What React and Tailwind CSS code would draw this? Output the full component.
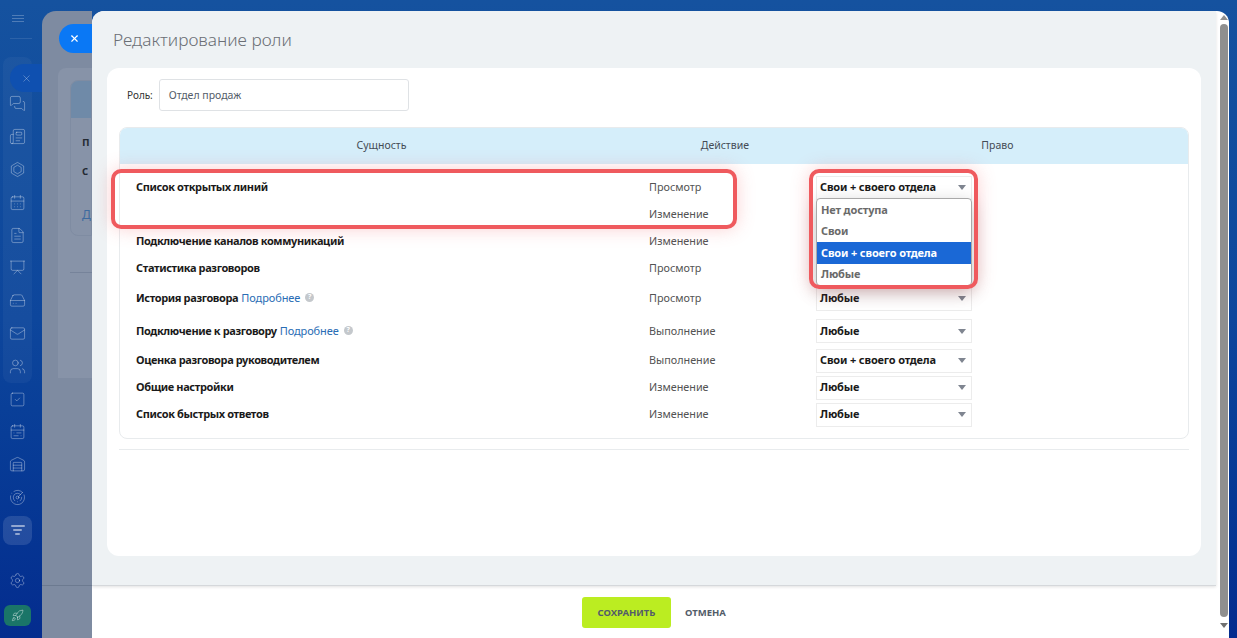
import React from "react";
import {
  MessagesSquare, Newspaper, CalendarDays, FileText, Presentation, HardDrive,
  Mail, Users, SquareCheck, CalendarRange, Warehouse, Radar, Settings, Rocket, X,
} from "lucide-react";

// шестиугольник с кольцом внутри, в lucide такого нет
function HexRing({ className, strokeWidth }) {
  return (
    <svg viewBox="0 0 24 24" fill="none" stroke="currentColor" strokeWidth={strokeWidth} strokeLinejoin="round" className={className}>
      <path d="M12 2l8.7 5v10L12 22l-8.7-5V7z" />
      <path d="M12 6l5.2 3v6L12 18l-5.2-3V9z" />
    </svg>
  );
}

const topIcons = [MessagesSquare, Newspaper, HexRing, CalendarDays, FileText, Presentation, HardDrive, Mail, Users];
const bottomIcons = [SquareCheck, CalendarRange, Warehouse, Radar];

const rows = [
  { name: "Список открытых линий", action: "Просмотр", right: "Свои + своего отдела", h: "h-[27px]" },
  { name: "", action: "Изменение", right: "Любые", h: "h-[27px]" },
  { name: "Подключение каналов коммуникаций", action: "Изменение", right: "Любые", h: "h-[27px]" },
  { name: "Статистика разговоров", action: "Просмотр", right: "Любые", h: "h-[27px]" },
  { name: "История разговора", more: true, action: "Просмотр", right: "Любые", h: "h-[33px]" },
  { name: "Подключение к разговору", more: true, action: "Выполнение", right: "Любые", h: "h-[32px]" },
  { name: "Оценка разговора руководителем", action: "Выполнение", right: "Свои + своего отдела", h: "h-[27px]" },
  { name: "Общие настройки", action: "Изменение", right: "Любые", h: "h-[27px]" },
  { name: "Список быстрых ответов", action: "Изменение", right: "Любые", h: "h-[27px]" },
];

const options = ["Нет доступа", "Свои", "Свои + своего отдела", "Любые"];

function Sidebar() {
  return (
    <aside className="relative w-[42px] shrink-0 flex flex-col">
      <div className="mt-[15px] ml-[12px] w-[12px] flex flex-col gap-[2px]">
        <div className="h-px bg-white/25" />
        <div className="h-px bg-white/25" />
        <div className="h-px bg-white/25" />
      </div>
      <div className="mt-[16px] mx-[10px] h-px bg-white/10" />
      <div className="mt-[18px] ml-[3px] w-[29px] rounded-lg bg-white/[0.04] pt-[30.6px]">
        {topIcons.map((Icon, i) => (
          <div key={i} className="h-[32.8px] flex items-center justify-center">
            <Icon className="w-[17px] h-[17px] text-white/35" strokeWidth={1.4} />
          </div>
        ))}
      </div>
      <div className="ml-[3px] w-[29px]">
        {bottomIcons.map((Icon, i) => (
          <div key={i} className="h-[32.8px] flex items-center justify-center">
            <Icon className="w-[17px] h-[17px] text-white/35" strokeWidth={1.4} />
          </div>
        ))}
        <div className="mt-[2px] h-[29px] rounded-lg bg-white/[0.12] flex flex-col items-center justify-center gap-[2px]">
          <div className="h-[2px] w-[14px] rounded bg-white/50" />
          <div className="h-[2px] w-[9px] rounded bg-white/50" />
          <div className="h-[2px] w-[5px] rounded bg-white/50" />
        </div>
        <div className="mt-[27px] h-[17px] flex items-center justify-center">
          <Settings className="w-[17px] h-[17px] text-white/35" strokeWidth={1.4} />
        </div>
        <div className="mt-[16px] ml-px w-[27px] h-[21px] rounded-md bg-[#1a7568] flex items-center justify-center">
          <Rocket className="w-[13px] h-[13px] text-white/50" strokeWidth={1.5} />
        </div>
      </div>
      {/* закрывающая вкладка первого слайдера */}
      <div className="absolute left-[10px] top-[64px] w-[32px] h-[28px] rounded-l-full bg-[#0f50b0] flex items-center justify-center">
        <X className="w-[11px] h-[11px] text-white/30" strokeWidth={2} />
      </div>
    </aside>
  );
}

function BackPanel() {
  return (
    <div className="mt-[11px] w-[50px] shrink-0 rounded-tl-[14px] bg-[#7e8ba1] overflow-hidden flex flex-col">
      <div className="mt-[13px] ml-[17px] h-[29px] rounded-l-full bg-[#0a78f5] flex items-center pl-[10px]">
        <X className="w-[11px] h-[11px] text-white" strokeWidth={2.5} />
      </div>
      <div className="mt-[15px] ml-[16px] h-[310px] rounded-tl-lg bg-[#8793a8] pl-[12px] pt-[12px] shrink-0">
        <div className="h-[156px] rounded-l-lg border border-[#7f8ca2] overflow-hidden">
          <div className="h-[37px] bg-[#6f8aa8]" />
          <div className="pl-[11px] pt-[15px] text-[12px] font-semibold text-[#232a33]">
            <div>п</div>
            <div className="mt-[11px]">с</div>
            <div className="mt-[26px] font-normal text-[#3d6a9f]">Д</div>
          </div>
        </div>
        <div className="mt-[36px] h-px bg-[#76839a]" />
      </div>
      <div className="mt-[207px] h-px bg-[#6c7a90]" />
    </div>
  );
}

function PermSelect({ value }) {
  return (
    <div className="w-[156px] h-[24px] border border-[#ececec] bg-white flex items-center justify-between pl-[3px] pr-[5px]">
      <span className="text-[11px] font-bold tracking-[-0.15px] text-[#1a1a1a] whitespace-nowrap">{value}</span>
      <span className="w-0 h-0 border-x-[4px] border-x-transparent border-t-[5px] border-t-[#7f8590]" />
    </div>
  );
}

function Row({ row, index }) {
  return (
    <div className={`flex items-center ${row.h}`}>
      <div className="w-[524px] pl-[16px] text-[11px] whitespace-nowrap">
        <span className="font-bold tracking-[-0.38px] text-[#1a1a1a]">{row.name}</span>
        {row.more && (
          <>
            <span className="ml-[3px] tracking-[-0.1px] text-[#2a6db5]">Подробнее</span>
            <span className="ml-[5px] inline-flex w-[9px] h-[9px] rounded-full bg-[#c4c8cc] text-white text-[7px] font-bold items-center justify-center align-[3px]">?</span>
          </>
        )}
      </div>
      <div className="w-[164px] pl-[5px] text-[10.8px] text-[#535353]">{row.action}</div>
      <div className={`pl-[8px] ${index === 1 || index === 2 || index === 3 ? "invisible" : ""}`}>
        <PermSelect value={row.right} />
      </div>
    </div>
  );
}

export default function App() {
  return (
    <div className="relative flex w-[1237px] h-[638px] overflow-hidden bg-gradient-to-b from-[#15529f] via-[#0d469c] to-[#042c8e] font-['Open_Sans',sans-serif]">
      <Sidebar />
      <BackPanel />

      <section className="mt-[11px] w-[1137px] shrink-0 rounded-t-[12px] overflow-hidden bg-white flex">
        <div className="w-[1124px] flex flex-col">
          <div className="h-[575px] shrink-0 bg-[#eef2f4] border-b border-[#d5d8db] shadow-[0_1px_3px_rgba(0,0,0,0.12)] px-[15px]">
            <h1 className="pt-[17px] pl-[6px] h-[57px] text-[17.3px] leading-[24px] font-light text-[#6b6f75]">Редактирование роли</h1>
            <div className="w-[1094px] h-[488px] rounded-xl bg-white px-[12px] pt-[11px]">
              <div className="flex items-center h-[32px]">
                <span className="ml-[8px] text-[10px] text-[#333]">Роль:</span>
                <div className="ml-[6px] w-[250px] h-[32px] border border-[#dfe2e5] rounded-[3px] flex items-center pl-[9px] pt-[2px] text-[10.5px] text-[#535c69]">Отдел продаж</div>
              </div>
              <div className="mt-[16px] w-[1070px] h-[312px] rounded-lg border border-[#e8ebed] overflow-hidden">
                <div className="flex items-center h-[36px] bg-[#d5eefa] text-[10.5px] text-[#444b55]">
                  <div className="w-[524px] text-center">Сущность</div>
                  <div className="w-[164px] text-center">Действие</div>
                  <div className="w-[382px] text-center">Право</div>
                </div>
                <div className="pt-[10px]">
                  {rows.map((row, i) => (
                    <Row key={i} row={row} index={i} />
                  ))}
                </div>
              </div>
              <div className="mt-[10px] w-[1070px] h-px bg-[#e8ebed]" />
            </div>
          </div>
          <footer className="flex-1 flex items-center pl-[490px]">
            <button className="w-[89px] h-[31px] rounded-[3px] bg-[#bbed21] text-[9.5px] pt-[3px] font-bold text-[#535c69]">СОХРАНИТЬ</button>
            <button className="ml-[14px] text-[9.5px] pt-[3px] font-bold text-[#535c69]">ОТМЕНА</button>
          </footer>
        </div>
        <div className="w-[13px] flex flex-col items-center pl-[3px] pt-[4px] pb-[4px]">
          <span className="w-0 h-0 border-x-[4px] border-x-transparent border-b-[5px] border-b-[#909090]" />
          <div className="mt-[4px] w-[8px] h-[593px] rounded-full bg-[#8f8f8f]" />
          <span className="mt-[6px] w-0 h-0 border-x-[4px] border-x-transparent border-t-[5px] border-t-[#707070]" />
        </div>
      </section>

      {/* открытый список прав */}
      <div className="absolute left-[816px] top-[198px] w-[156px] h-[88px] rounded-[4px] border border-[#a9a9a9] bg-white overflow-hidden shadow-[0_6px_18px_rgba(0,0,0,0.25)]">
        {options.map((o) => (
          <div
            key={o}
            className={`h-[21.5px] flex items-center pl-[4px] text-[11px] font-bold tracking-[-0.15px] ${o === "Свои + своего отдела" ? "bg-[#1a68d6] text-white" : "text-[#6a6a6a]"}`}
          >
            {o}
          </div>
        ))}
      </div>

      {/* красные выделения */}
      <div className="absolute left-[111px] top-[169px] w-[626px] h-[60px] rounded-[10px] border-[4px] border-[#ef5a5e] shadow-[0_0_18px_rgba(239,90,94,0.28)] pointer-events-none" />
      <div className="absolute left-[809px] top-[169px] w-[169px] h-[120px] rounded-[10px] border-[4px] border-[#ef5a5e] shadow-[0_0_18px_rgba(239,90,94,0.28)] pointer-events-none" />
    </div>
  );
}
